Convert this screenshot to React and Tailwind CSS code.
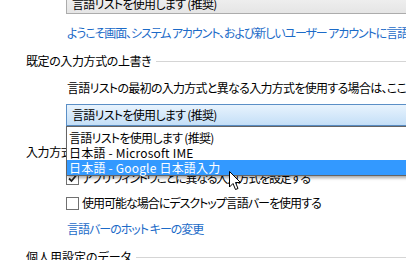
import React from "react";

function Checkbox({ checked }) {
  return (
    <div className="w-[13px] h-[13px] border border-[#707070] bg-white flex items-center justify-center shrink-0">
      {checked && (
        <svg width="9" height="9" viewBox="0 0 9 9">
          <path d="M1 4.5 L3.5 7 L8 1.5" stroke="#222" strokeWidth="1.8" fill="none" />
        </svg>
      )}
    </div>
  );
}

function Header({ children, className = "" }) {
  return (
    <div className="flex items-center h-[16px] pl-[26px]">
      <span className={"whitespace-nowrap " + className}>{children}</span>
      <div className="flex-1 h-px bg-[#d5d5d5] ml-[5px]" />
    </div>
  );
}

export default function App() {
  return (
    <div className="relative w-[406px] h-[260px] overflow-hidden bg-white text-black text-[12px] leading-[16px] font-['Noto_Sans_CJK_JP',sans-serif] [font-feature-settings:'palt']">
      {/* top combo */}
      <div className="ml-[66px] mt-[-7px] h-[21px] w-[400px] border border-[#acacac] bg-gradient-to-b from-[#f2f2f2] to-[#e5e5e5] flex items-center pl-[5px] whitespace-nowrap tracking-[-0.7px]">
        言語リストを使用します (推奨)
      </div>
      <div className="ml-[67px] mt-[11px] h-[16px] whitespace-nowrap text-[#1c6bc8] tracking-[-1.1px]">
        ようこそ画面、システム アカウント、および新しいユーザー アカウントに言語設定をコピーします
      </div>
      <div className="mt-[12px]">
        <Header className="tracking-[-0.4px]">既定の入力方式の上書き</Header>
      </div>
      <div className="ml-[67px] mt-[11px] h-[16px] whitespace-nowrap tracking-[-0.7px]">
        言語リストの最初の入力方式と異なる入力方式を使用する場合は、ここで選択してください
      </div>
      {/* open combo */}
      <div className="ml-[66px] mt-[8px] h-[22px] w-[400px] border border-[#5b8fc6] bg-gradient-to-b from-[#e8f3fd] to-[#c4dff7] flex items-center pl-[5px] whitespace-nowrap tracking-[-0.7px]">
        言語リストを使用します (推奨)
      </div>
      <div className="mt-[18px]">
        <Header className="tracking-[-0.4px]">入力方式の切り替え</Header>
      </div>
      <div className="ml-[66px] mt-[10px] h-[16px] flex items-center gap-[3px] whitespace-nowrap">
        <Checkbox checked />
        <span className="tracking-[-1.25px]">アプリ ウィンドウごとに異なる入力方式を設定する</span>
      </div>
      <div className="ml-[66px] mt-[9px] h-[16px] flex items-center gap-[3px] whitespace-nowrap">
        <Checkbox />
        <span className="tracking-[-1px]">使用可能な場合にデスクトップ言語バーを使用する</span>
      </div>
      <div className="ml-[67px] mt-[10px] h-[16px] whitespace-nowrap text-[#1c6bc8] tracking-[-1px]">
        言語バーのホット キーの変更
      </div>
      <div className="mt-[12px]">
        <Header>個人用設定のデータ</Header>
      </div>

      {/* dropdown list */}
      <div className="absolute left-[66px] top-[126px] w-[400px] border border-[#646464] bg-white pt-[3px] shadow-[2px_2px_3px_rgba(0,0,0,0.35)]">
        <div className="h-[15px] leading-[15px] pl-[2px] whitespace-nowrap tracking-[-0.7px]">言語リストを使用します (推奨)</div>
        <div className="h-[15px] leading-[15px] pl-[2px] whitespace-nowrap tracking-[0.2px]">日本語 - Microsoft IME</div>
        <div className="h-[15px] leading-[15px] pl-[2px] whitespace-nowrap bg-[#3399ff] text-white tracking-[0.2px]">日本語 - Google 日本語入力</div>
      </div>

      {/* cursor */}
      <svg className="absolute left-[229px] top-[171px]" width="13" height="20" viewBox="0 0 13 20">
        <path d="M0.5 0.5 L0.5 16 L4 12.5 L6.5 18.5 L9 17.5 L6.5 11.5 L11.5 11.5 Z" fill="white" stroke="black" strokeWidth="1" />
      </svg>
    </div>
  );
}
